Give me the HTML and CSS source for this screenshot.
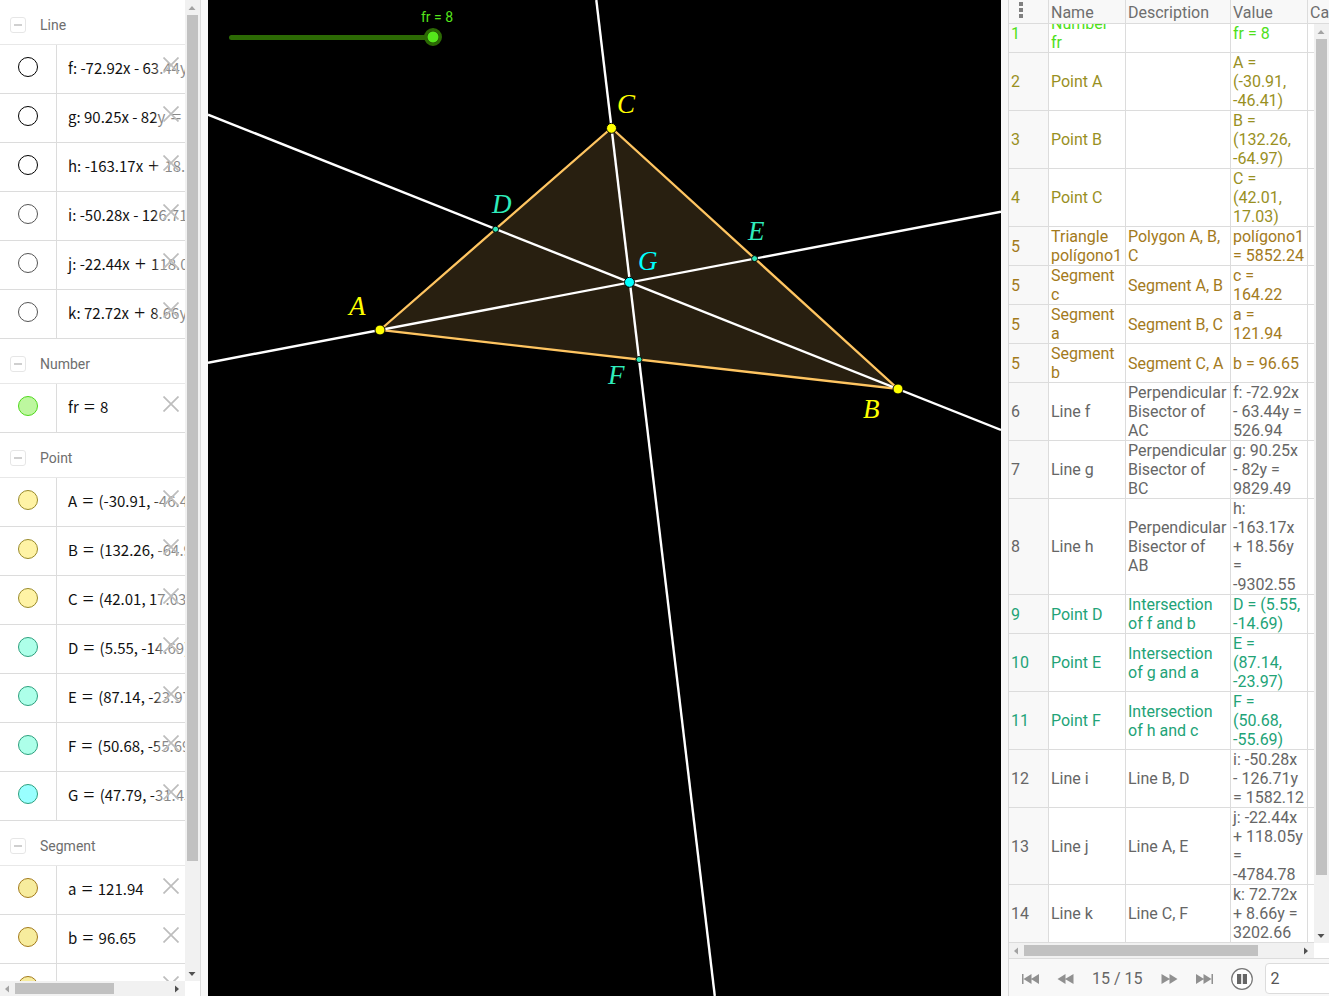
FILE: index.html
```html
<!DOCTYPE html>
<html lang="en">
<head>
<meta charset="utf-8">
<title>Triangle medians</title>
<link rel="stylesheet" href="styles.css">
</head>
<body>
<svg class="defs" aria-hidden="true">
  <symbol id="cross" viewBox="0 0 16 16"><path d="M0.5 0.5 15.5 15.5M15.5 0.5 0.5 15.5" fill="none" stroke="#bdbdbd" stroke-width="1.7"/></symbol>
  <symbol id="minus" viewBox="0 0 16 16"><rect x="0.5" y="0.5" width="15" height="15" rx="2.5" fill="#fff" stroke="#e6e6e6"/><path d="M4 8h8" stroke="#c4c4c4" stroke-width="1.6"/></symbol>
  <symbol id="tri" viewBox="0 0 8 8"><path d="M0.5 6 4 2 7.500 6Z" fill="currentColor"/></symbol>
</svg>
<main class="app">
  <section class="algebra" aria-label="Algebra">
    <div class="algebra-body">
      <div class="list">
        <h2 class="group"><button aria-label="Collapse lines"><svg><use href="#minus"/></svg></button>Line</h2>
        <div class="item"><div class="mark"><button class="dot black" aria-label="Show f"></button></div><div class="expr">f: -72.92x - 63.44y</div><button class="del" aria-label="Delete f"><svg><use href="#cross"/></svg></button></div>
        <div class="item"><div class="mark"><button class="dot black" aria-label="Show g"></button></div><div class="expr">g: 90.25x - 82y<span class="op">=</span></div><button class="del" aria-label="Delete g"><svg><use href="#cross"/></svg></button></div>
        <div class="item"><div class="mark"><button class="dot black" aria-label="Show h"></button></div><div class="expr">h: -163.17x<span class="op">+</span>18.56y</div><button class="del" aria-label="Delete h"><svg><use href="#cross"/></svg></button></div>
        <div class="item"><div class="mark"><button class="dot gray" aria-label="Show i"></button></div><div class="expr">i: -50.28x - 126.71y</div><button class="del" aria-label="Delete i"><svg><use href="#cross"/></svg></button></div>
        <div class="item"><div class="mark"><button class="dot gray" aria-label="Show j"></button></div><div class="expr">j: -22.44x<span class="op">+</span>118.05y</div><button class="del" aria-label="Delete j"><svg><use href="#cross"/></svg></button></div>
        <div class="item"><div class="mark"><button class="dot gray" aria-label="Show k"></button></div><div class="expr">k: 72.72x<span class="op">+</span>8.66y</div><button class="del" aria-label="Delete k"><svg><use href="#cross"/></svg></button></div>

        <h2 class="group"><button aria-label="Collapse numbers"><svg><use href="#minus"/></svg></button>Number</h2>
        <div class="item"><div class="mark"><button class="dot green" aria-label="Show fr"></button></div><div class="expr">fr<span class="op">=</span>8</div><button class="del" aria-label="Delete fr"><svg><use href="#cross"/></svg></button></div>

        <h2 class="group"><button aria-label="Collapse points"><svg><use href="#minus"/></svg></button>Point</h2>
        <div class="item"><div class="mark"><button class="dot yellow" aria-label="Show A"></button></div><div class="expr">A<span class="op">=</span>(-30.91, -46.41)</div><button class="del" aria-label="Delete A"><svg><use href="#cross"/></svg></button></div>
        <div class="item"><div class="mark"><button class="dot yellow" aria-label="Show B"></button></div><div class="expr">B<span class="op">=</span>(132.26, -64.97)</div><button class="del" aria-label="Delete B"><svg><use href="#cross"/></svg></button></div>
        <div class="item"><div class="mark"><button class="dot yellow" aria-label="Show C"></button></div><div class="expr">C<span class="op">=</span>(42.01, 17.03)</div><button class="del" aria-label="Delete C"><svg><use href="#cross"/></svg></button></div>
        <div class="item"><div class="mark"><button class="dot mint" aria-label="Show D"></button></div><div class="expr">D<span class="op">=</span>(5.55, -14.69)</div><button class="del" aria-label="Delete D"><svg><use href="#cross"/></svg></button></div>
        <div class="item"><div class="mark"><button class="dot mint" aria-label="Show E"></button></div><div class="expr">E<span class="op">=</span>(87.14, -23.97)</div><button class="del" aria-label="Delete E"><svg><use href="#cross"/></svg></button></div>
        <div class="item"><div class="mark"><button class="dot mint" aria-label="Show F"></button></div><div class="expr">F<span class="op">=</span>(50.68, -55.69)</div><button class="del" aria-label="Delete F"><svg><use href="#cross"/></svg></button></div>
        <div class="item"><div class="mark"><button class="dot cyan" aria-label="Show G"></button></div><div class="expr">G<span class="op">=</span>(47.79, -31.45)</div><button class="del" aria-label="Delete G"><svg><use href="#cross"/></svg></button></div>

        <h2 class="group"><button aria-label="Collapse segments"><svg><use href="#minus"/></svg></button>Segment</h2>
        <div class="item"><div class="mark"><button class="dot gold" aria-label="Show a"></button></div><div class="expr">a<span class="op">=</span>121.94</div><button class="del" aria-label="Delete a"><svg><use href="#cross"/></svg></button></div>
        <div class="item"><div class="mark"><button class="dot gold" aria-label="Show b"></button></div><div class="expr">b<span class="op">=</span>96.65</div><button class="del" aria-label="Delete b"><svg><use href="#cross"/></svg></button></div>
        <div class="item"><div class="mark"><button class="dot gold" aria-label="Show c"></button></div><div class="expr">c<span class="op">=</span>164.22</div><button class="del" aria-label="Delete c"><svg><use href="#cross"/></svg></button></div>
      </div>
      <div class="vbar"><svg class="arrow off"><use href="#tri"/></svg><div class="track"><div class="thumb t-list"></div></div><svg class="arrow down"><use href="#tri"/></svg></div>
    </div>
    <div class="hrow"><div class="hbar"><svg class="arrow off left"><use href="#tri"/></svg><div class="track"><div class="thumb t-listx"></div></div><svg class="arrow right"><use href="#tri"/></svg></div><div class="corner"></div></div>
  </section>

  <div class="split"></div>

  <section class="graphics" aria-label="Graphics">
    <svg class="plot" viewBox="208 0 793 996" preserveAspectRatio="xMinYMin slice">
      <path d="M380 330 611.500 128 898 389Z" fill="#281f10"/>
      <g fill="none" stroke="#ffc561" stroke-width="2.300"><path d="M380 330 611.500 128 898 389Z"/></g>
      <g stroke="#fff" stroke-width="2.400">
        <path d="M208 114.600 1001 430"/>
        <path d="M208 362.700 1001 211.800"/>
        <path d="M596.300 0 714.800 996"/>
      </g>
      <g stroke="#000" stroke-width="1">
        <g fill="#ff0"><circle cx="380" cy="330" r="5"/><circle cx="611.500" cy="128.300" r="5"/><circle cx="898" cy="389" r="5"/></g>
        <circle cx="629.500" cy="282.300" r="5" fill="#0ff"/>
        <g fill="#2fe8b8"><circle cx="495.600" cy="229.200" r="3"/><circle cx="754.600" cy="258.600" r="3"/><circle cx="639" cy="359.500" r="3"/></g>
      </g>
      <g class="names">
        <g fill="#ff0"><text x="349" y="315">A</text><text x="863" y="418">B</text><text x="617" y="113">C</text></g>
        <g fill="#2fecbc"><text x="492" y="213">D</text><text x="748" y="240">E</text><text x="608" y="384">F</text></g>
        <text x="638" y="270" fill="#0ff">G</text>
      </g>
    </svg>
    <div class="slider">
      <label for="fr">fr = 8</label>
      <input id="fr" type="range" min="0" max="8" value="8">
    </div>
  </section>

  <div class="split right"></div>

  <section class="protocol" aria-label="Construction protocol">
    <table class="head">
      <colgroup><col class="c0"><col class="c1"><col class="c2"><col class="c3"><col></colgroup>
      <tr><th><button class="more" aria-label="Columns"><svg viewBox="0 0 4 16"><path d="M0 0h4v4H0zM0 6h4v4H0zM0 12h4v4H0z" fill="#808080"/></svg></button></th><th>Name</th><th>Description</th><th>Value</th><th>Caption</th></tr>
    </table>
    <div class="protocol-body">
      <div class="rows">
        <table class="steps">
          <colgroup><col class="c0"><col class="c1"><col class="c2"><col class="c3"><col></colgroup>
          <tr class="lime"><td>1</td><td>Number<br>fr</td><td></td><td>fr = 8</td><td></td></tr>
          <tr class="olive"><td>2</td><td>Point A</td><td></td><td>A =<br>(-30.91,<br>-46.41)</td><td></td></tr>
          <tr class="olive"><td>3</td><td>Point B</td><td></td><td>B =<br>(132.26,<br>-64.97)</td><td></td></tr>
          <tr class="olive"><td>4</td><td>Point C</td><td></td><td>C =<br>(42.01,<br>17.03)</td><td></td></tr>
          <tr class="brown"><td>5</td><td>Triangle<br>polígono1</td><td>Polygon A, B,<br>C</td><td>polígono1<br>= 5852.24</td><td></td></tr>
          <tr class="brown"><td>5</td><td>Segment<br>c</td><td>Segment A, B</td><td>c =<br>164.22</td><td></td></tr>
          <tr class="brown"><td>5</td><td>Segment<br>a</td><td>Segment B, C</td><td>a =<br>121.94</td><td></td></tr>
          <tr class="brown"><td>5</td><td>Segment<br>b</td><td>Segment C, A</td><td>b = 96.65</td><td></td></tr>
          <tr><td>6</td><td>Line f</td><td>Perpendicular<br>Bisector of<br>AC</td><td>f: -72.92x<br>- 63.44y =<br>526.94</td><td></td></tr>
          <tr><td>7</td><td>Line g</td><td>Perpendicular<br>Bisector of<br>BC</td><td>g: 90.25x<br>- 82y =<br>9829.49</td><td></td></tr>
          <tr><td>8</td><td>Line h</td><td>Perpendicular<br>Bisector of<br>AB</td><td>h:<br>-163.17x<br>+ 18.56y<br>=<br>-9302.55</td><td></td></tr>
          <tr class="teal"><td>9</td><td>Point D</td><td>Intersection<br>of f and b</td><td>D = (5.55,<br>-14.69)</td><td></td></tr>
          <tr class="teal"><td>10</td><td>Point E</td><td>Intersection<br>of g and a</td><td>E =<br>(87.14,<br>-23.97)</td><td></td></tr>
          <tr class="teal"><td>11</td><td>Point F</td><td>Intersection<br>of h and c</td><td>F =<br>(50.68,<br>-55.69)</td><td></td></tr>
          <tr><td>12</td><td>Line i</td><td>Line B, D</td><td>i: -50.28x<br>- 126.71y<br>= 1582.12</td><td></td></tr>
          <tr><td>13</td><td>Line j</td><td>Line A, E</td><td>j: -22.44x<br>+ 118.05y<br>=<br>-4784.78</td><td></td></tr>
          <tr><td>14</td><td>Line k</td><td>Line C, F</td><td>k: 72.72x<br>+ 8.66y =<br>3202.66</td><td></td></tr>
        </table>
      </div>
      <div class="vbar"><svg class="arrow off"><use href="#tri"/></svg><div class="track"><div class="thumb t-steps"></div></div><svg class="arrow down"><use href="#tri"/></svg></div>
    </div>
    <div class="hrow"><div class="hbar"><svg class="arrow off left"><use href="#tri"/></svg><div class="track"><div class="thumb t-stepsx"></div></div><svg class="arrow right"><use href="#tri"/></svg></div><div class="corner"></div></div>
    <div class="player">
      <button aria-label="First step"><svg viewBox="0 0 17 10"><path d="M0 0h1.500v10H0zM9.500 0v10L1.500 5zM17 0v10L9 5z"/></svg></button>
      <button aria-label="Previous step"><svg viewBox="0 0 17 10"><path d="M8.500 0v10L0.500 5zM16.500 0v10L8 5z"/></svg></button>
      <span class="count">15 / 15</span>
      <button aria-label="Next step"><svg viewBox="0 0 17 10"><path d="M0.500 0v10L9 5zM8.500 0v10L16.500 5z"/></svg></button>
      <button aria-label="Last step"><svg viewBox="0 0 17 10"><path d="M15.500 0H17v10h-1.500zM0 0v10L8 5zM7.500 0v10L15.500 5z"/></svg></button>
      <button class="pause" aria-label="Pause"><svg viewBox="0 0 22 22"><circle cx="11" cy="11" r="10.300" fill="#fff" stroke="#777" stroke-width="1.200"/><path d="M6 6h4.200v10H6zM11.800 6H16v10h-4.200z" fill="#666"/></svg></button>
      <input type="text" value="2" aria-label="Seconds per step">
    </div>
  </section>
</main>
</body>
</html>
```
FILE: styles.css
```css
* { box-sizing: border-box; }

body {
  margin: 0;
  height: 100vh;
  padding: 0 2px 2px 0;
  overflow: hidden;
  background: #fff;
  color: #666;
  font: 16px/19px Roboto, "Liberation Sans", sans-serif;
}

button { padding: 0; border: 0; background: none; font: inherit; color: inherit; }
svg { display: block; }
.defs { position: absolute; width: 0; height: 0; }

.app {
  display: grid;
  grid-template-columns: 201px 7px minmax(0, 1fr) 7px 321px;
  grid-template-rows: minmax(0, 1fr);
  height: 100%;
}
.split { background: #f8f8f8; }

/* Algebra list */
.algebra { display: flex; flex-direction: column; min-height: 0; border-right: 1px solid #dcdcdc; }
.algebra-body { display: flex; flex: 1; min-height: 0; }
.list { flex: 1; min-width: 0; overflow: hidden; }
.group {
  display: flex;
  align-items: center;
  gap: 14px;
  height: 45px;
  margin: 0;
  padding: 6px 0 0 10px;
  border-bottom: 1px solid #e8e8e8;
  color: #6e6e6e;
  font-size: 14px;
  font-weight: 400;
}
.group svg { width: 16px; height: 16px; }
.item {
  position: relative;
  display: flex;
  height: 49px;
  border-bottom: 1px solid #dcdcdc;
  overflow: hidden;
}
.mark { display: flex; flex: none; justify-content: center; width: 57px; padding-top: 12px; border-right: 1px solid #dcdcdc; }
.dot { width: 20px; height: 20px; border: 1px solid #000; border-radius: 50%; background: #fff; }
.dot.gray { border-color: #555; }
.dot.green { border-color: #4fd81c; background: #bdf79f; }
.dot.yellow { border-color: #998a2a; background: #fff3a5; }
.dot.mint { border-color: #2d9f7d; background: #adffe9; }
.dot.cyan { border-color: #2d9f7d; background: #99ffff; }
.dot.gold { border-color: #a27a1c; background: #f7ec9d; }
.expr {
  padding-left: 11px;
  color: #111;
  font: 15px/46px "Noto Sans CJK SC", "Noto Sans", sans-serif;
  white-space: nowrap;
}
.op { padding: 0 5px; font: 20px/1px "Liberation Serif", serif; vertical-align: -1px; }
.del {
  position: absolute;
  top: 0;
  right: 0;
  width: 32px;
  height: 48px;
  padding: 0 6px 8px 10px;
  background: linear-gradient(to right, rgba(255,255,255,0), rgba(255,255,255,.5) 8px);
}
.del svg { width: 16px; height: 16px; }

/* Scroll bars */
.vbar { display: flex; flex-direction: column; flex: none; align-items: center; width: 15px; background: #f1f1f1; }
.hrow { display: flex; flex: none; height: 15px; }
.hbar { display: flex; flex: 1; align-items: center; background: #f1f1f1; }
.corner { flex: none; width: 15px; background: #fff; }
.arrow { flex: none; width: 8px; height: 8px; margin: 4px 4px 3px 3px; color: #505050; }
.arrow.off { color: #a3a3a3; }
.arrow.down { transform: rotate(180deg); }
.arrow.left { transform: rotate(-90deg); }
.arrow.right { transform: rotate(90deg); }
.track { flex: 1; min-height: 0; }
.thumb { background: #c1c1c1; }
.vbar .thumb { width: 11px; }
.hbar .thumb { height: 11px; }
.t-list { height: 89%; }
.t-listx { width: 64%; }
.t-steps { height: 94%; }
.t-stepsx { width: 85%; }

/* Graphics view */
.graphics { position: relative; overflow: hidden; background: #000; }
.plot { width: 100%; height: 100%; }
.names { font: italic 27px "Liberation Serif", serif; }
.slider { position: absolute; top: 9px; left: 21px; display: flex; flex-direction: column; width: 213px; }
.slider label { align-self: flex-end; width: 42px; margin-right: -16px; color: #55e61b; font-size: 14px; line-height: 16px; text-align: center; }
.slider input { appearance: none; width: 100%; height: 18px; margin: 3px 0 0; background: none; }
.slider input::-webkit-slider-runnable-track { height: 5px; border-radius: 3px; background: linear-gradient(to right, #2c6a04 205px, transparent 205px); }
.slider input::-webkit-slider-thumb {
  appearance: none;
  width: 18px;
  height: 18px;
  margin-top: -7px;
  border: 3px solid #2c6a04;
  border-radius: 50%;
  background: radial-gradient(circle, #55e61b 5px, #1c4503 6px);
}

/* Construction protocol */
.protocol { display: flex; flex-direction: column; min-height: 0; min-width: 0; border-left: 1px solid #d8d8d8; }
table { width: 100%; table-layout: fixed; border-collapse: separate; border-spacing: 0; }
.c0 { width: 40px; }
.c1 { width: 77px; }
.c2 { width: 105px; }
.c3 { width: 77px; }
th, td { padding: 0 0 0 2px; border-right: 1px solid #dcdcdc; border-bottom: 1px solid #dcdcdc; text-align: left; white-space: nowrap; overflow: hidden; }
th:last-child, td:last-child { border-right: 0; }
th { height: 24px; padding-top: 1px; background: #f8f8f8; color: #6e6e6e; font-weight: 400; }
td:first-child { background: #f8f8f8; }
.more { display: block; padding: 0 8px 5px; }
.more svg { width: 4px; height: 16px; }
.protocol-body { display: flex; flex: 1; min-height: 0; }
.rows { flex: 1; min-width: 0; overflow: hidden; }
.steps { margin-top: -10px; }
.lime { color: #4fe01a; }
.olive { color: #99901f; }
.brown { color: #a37a1c; }
.teal { color: #22a377; }

.player {
  display: flex;
  flex: none;
  align-items: center;
  gap: 18px;
  height: 38px;
  padding: 2px 0 0 13px;
  border-top: 1px solid #dcdcdc;
  background: #f8f8f8;
  overflow: hidden;
}
.player svg { width: 17px; height: 10px; fill: #909090; }
.player button { flex: none; }
.player .pause svg { width: 22px; height: 22px; }
.player .pause { margin-right: -6px; }
.count { flex: none; color: #666; }
.player input {
  flex: none;
  width: 90px;
  height: 31px;
  padding: 0 5px;
  border: 1px solid #dcdcdc;
  border-radius: 4px;
  background: #fff;
  color: #555;
  font: inherit;
}
```
